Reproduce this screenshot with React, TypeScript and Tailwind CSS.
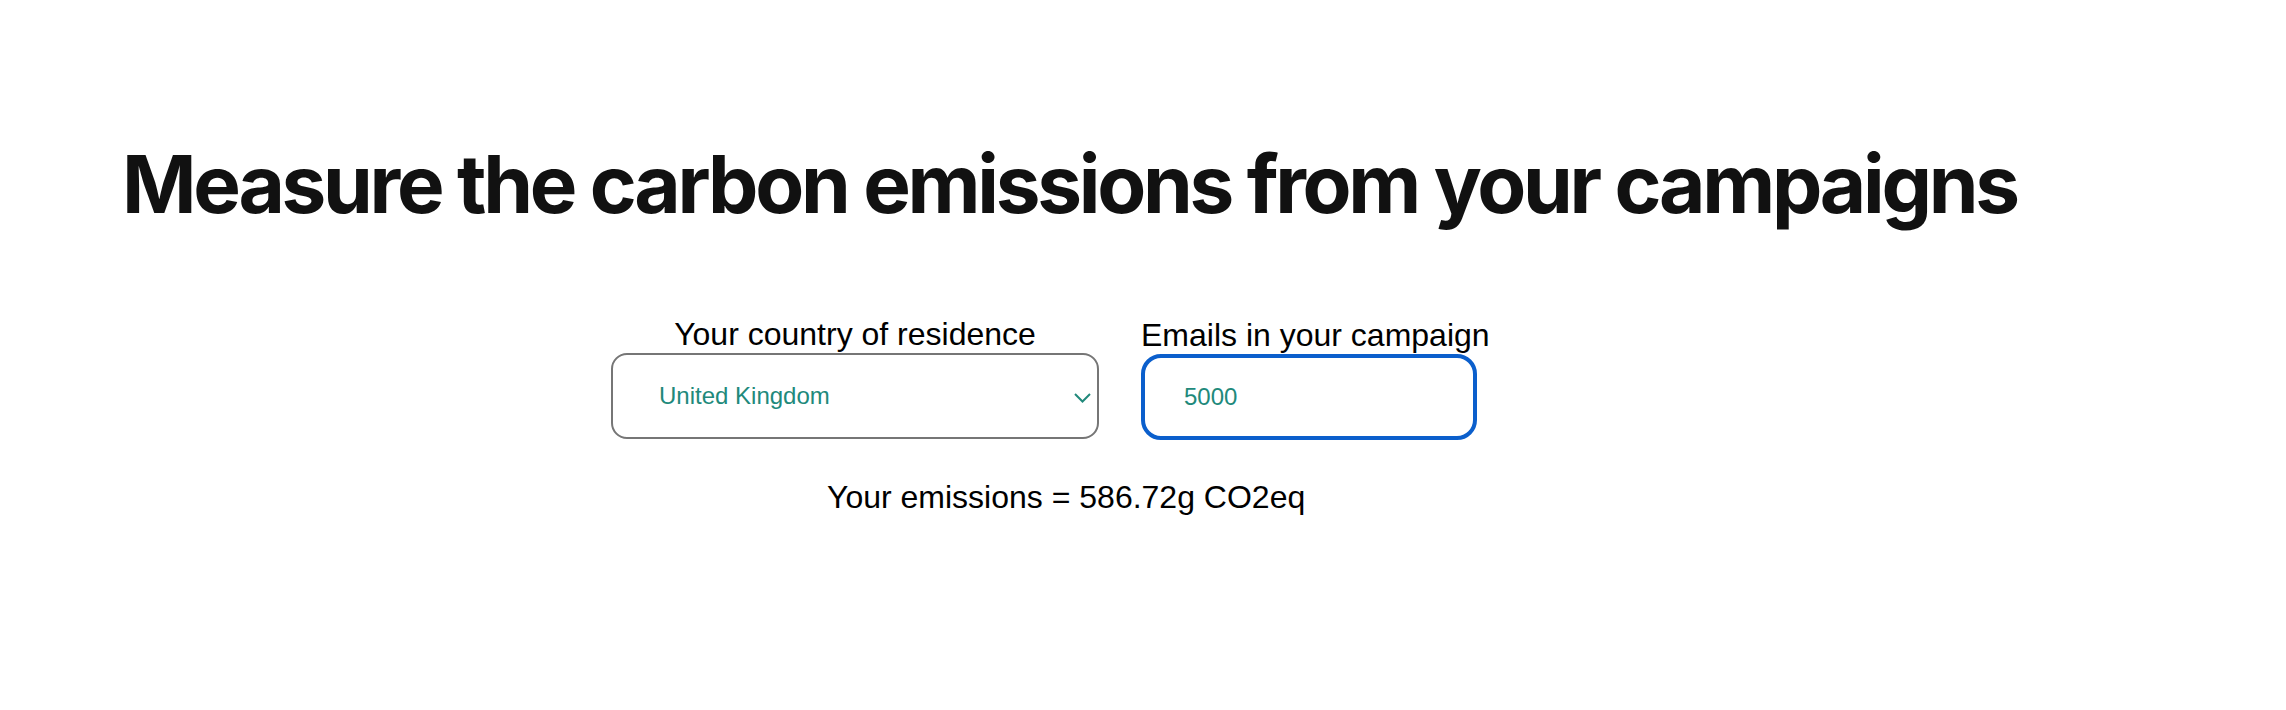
import { useState } from "react";

const COUNTRIES = ["United Kingdom", "France", "Germany", "Ireland", "Spain", "United States"];

export default function App() {
  const [country, setCountry] = useState("United Kingdom");
  const [emails, setEmails] = useState("5000");

  return (
    <div className="min-h-[710px] bg-white px-[122px] pt-[144px] text-[#111]">
      <h1 className="font-['Inter',sans-serif] text-[80px] font-bold leading-[80px] tracking-[-0.041em] whitespace-nowrap">
        Measure the carbon emissions from your campaigns
      </h1>

      <div className="mt-[92px] ml-[489px] font-['Liberation_Sans',Arial,sans-serif]">
        <div className="flex items-end gap-[42px]">
          <div className="flex w-[488px] flex-col items-center">
            <label className="whitespace-nowrap text-[32px] leading-[37px] text-black">Your country of residence</label>
            <div className="relative w-full">
              <select
                value={country}
                onChange={(e) => setCountry(e.target.value)}
                className="h-[86px] w-full appearance-none rounded-[16px] border-2 border-[#767676] bg-white pl-[46px] text-[24px] text-[#21897b] outline-none"
              >
                {COUNTRIES.map((c) => (
                  <option key={c}>{c}</option>
                ))}
              </select>
              <svg
                className="pointer-events-none absolute right-[8px] top-[40px] h-[10px] w-[17px]"
                viewBox="0 0 17 10"
                fill="none"
                stroke="#21897b"
                strokeWidth="2"
              >
                <path d="M1 1l7.5 7.5L16 1" />
              </svg>
            </div>
          </div>

          <div className="flex flex-col items-start">
            <label className="whitespace-nowrap text-[32px] leading-[37px] text-black">Emails in your campaign</label>
            <input
              value={emails}
              onChange={(e) => setEmails(e.target.value)}
              className="mb-[-1px] h-[86px] w-[336px] rounded-[20px] border-4 border-[#0b5fcc] bg-white pl-[39px] text-[24px] text-[#21897b] outline-none"
            />
          </div>
        </div>

        <p className="mt-[40px] ml-[216px] text-[32px] leading-[37px] text-black">
          Your emissions = 586.72g CO2eq
        </p>
      </div>
    </div>
  );
}
